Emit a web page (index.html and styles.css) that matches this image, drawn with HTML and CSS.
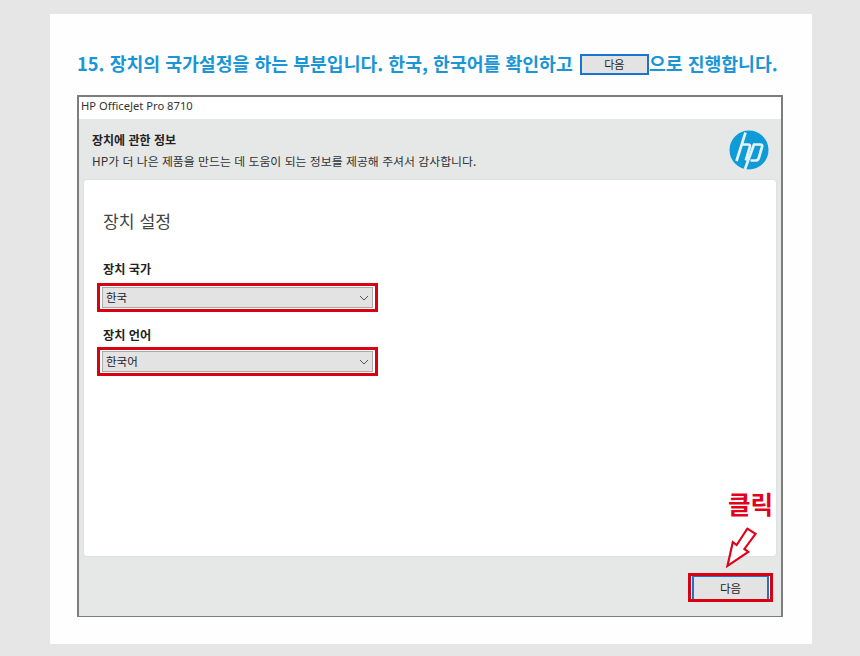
FILE: index.html
```html
<!DOCTYPE html>
<html lang="ko">
<head>
    <meta charset="UTF-8">
    <title>장치 설정</title>
    <link rel="stylesheet" href="styles.css">
</head>
<body>
<div class="panel">
    <h1 class="step">15. 장치의 국가설정을 하는 부분입니다. 한국, 한국어를 확인하고 <span class="step-btn">다음</span>으로 진행합니다.</h1>
    <div class="window">
        <div class="titlebar">HP OfficeJet Pro 8710</div>
        <div class="head">
            <div class="head-text">
                <div class="head-title">장치에 관한 정보</div>
                <div class="head-sub">HP가 더 나은 제품을 만드는 데 도움이 되는 정보를 제공해 주셔서 감사합니다.</div>
            </div>
            <svg class="logo" viewBox="0 0 40 40">
                <circle cx="20" cy="20" r="19.5" fill="#0f9bd7"/>
                <path d="M16.5 2.5 L7.5 31 M13 14.5 H19 Q21.5 14.5 20.8 17 L16.8 30.5" fill="none" stroke="#e6f4fa" stroke-width="2.7"/>
                <path d="M25 14.5 L16 39 M24 14.5 H31 Q33.8 14.5 33 17 L29.8 28 Q29 30.5 26.5 30.5 H21.5" fill="none" stroke="#e6f4fa" stroke-width="2.7"/>
            </svg>
        </div>
        <div class="card">
            <div class="card-title">장치 설정</div>
            <div class="field-label">장치 국가</div>
            <div class="mark">
                <div class="select">한국
                    <svg class="chev" viewBox="0 0 10 6"><path d="M1 1 L5 5 L9 1" fill="none" stroke="#555" stroke-width="1"/></svg>
                </div>
            </div>
            <div class="field-label">장치 언어</div>
            <div class="mark">
                <div class="select">한국어
                    <svg class="chev" viewBox="0 0 10 6"><path d="M1 1 L5 5 L9 1" fill="none" stroke="#555" stroke-width="1"/></svg>
                </div>
            </div>
        </div>
        <div class="foot">
            <div class="mark mark-next">
                <div class="next">다음</div>
            </div>
        </div>
        <!--클릭 표시-->
        <div class="click">클릭</div>
        <svg class="arrow" viewBox="0 0 32 42">
            <path d="M22 1.5 L30.5 7 L19 22.5 L23 25.5 L1.5 40 L7 15.5 L11 18.5 Z" fill="#fff" stroke="#e2001a" stroke-width="2.2"/>
        </svg>
    </div>
</div>
</body>
</html>
```

FILE: styles.css
```css
*{
    margin: 0;
    padding: 0;
    box-sizing: border-box;
}
body{
    background-color: #e6e6e6;
    padding: 14px 48px 12px 50px;
    font-family: "Noto Sans CJK KR", "Liberation Sans", sans-serif;
}
.panel{
    height: 630px;
    background-color: #fefefe;
    padding: 34px 29px 0 27px;
}
/*제목*/
.step{
    height: 47px;
    font-size: 18.3px;
    line-height: 30px;
    font-weight: 700;
    color: #1a96d6;
    white-space: nowrap;
}
.step-btn{
    display: inline-block;
    width: 69px;
    height: 21px;
    margin-left: 2px;
    vertical-align: 2px;
    background-color: #e3e3e3;
    border: 2px solid #1b74d2;
    font-size: 11px;
    line-height: 17px;
    font-weight: 400;
    color: #222;
    text-align: center;
}
/*창*/
.window{
    position: relative;
    width: 706px;
    height: 522px;
    background-color: #e6e8e8;
    border: 2px solid #7d7d7d;
    border-bottom-width: 1px;
    display: flex;
    flex-direction: column;
}
.titlebar{
    height: 22px;
    flex: none;
    background-color: #fff;
    padding-left: 2px;
    font-family: "Noto Sans", "Noto Sans CJK KR", sans-serif;
    font-size: 11.2px;
    line-height: 18px;
    color: #333;
}
.head{
    height: 61px;
    flex: none;
    display: flex;
    justify-content: space-between;
    padding: 13px 12px 0 13px;
}
.head-title{
    font-size: 12px;
    line-height: 15px;
    font-weight: 700;
    color: #222;
}
.head-sub{
    margin-top: 6px;
    font-size: 11.9px;
    line-height: 15px;
    color: #333;
}
.logo{
    width: 40px;
    height: 40px;
    margin-top: -2px;
}
.card{
    height: 376px;
    flex: none;
    margin: 0 5px;
    padding: 29px 19px 0;
    background-color: #fff;
    border-radius: 3px;
    box-shadow: 0 0 2px #cfd1d1;
}
.card-title{
    font-size: 17.2px;
    line-height: 24px;
    color: #444;
    margin-bottom: 28px;
}
.field-label{
    font-size: 12.2px;
    line-height: 16px;
    font-weight: 700;
    color: #222;
    margin-bottom: 6px;
}
.mark + .field-label{
    margin-bottom: 4px;
}
/*빨간 표시*/
.mark{
    width: 281px;
    height: 29px;
    border: 3px solid #d9000f;
    background-color: #fff;
    padding: 1px 2px;
    margin-left: -6px;
    margin-bottom: 15px;
}
.select{
    height: 21px;
    background-color: #e3e3e3;
    border: 1px solid #aaa;
    padding-left: 3px;
    font-size: 11.5px;
    line-height: 19px;
    color: #222;
    display: flex;
    justify-content: space-between;
    align-items: center;
}
.chev{
    width: 10px;
    height: 6px;
    margin-right: 3px;
}
.foot{
    flex: 1;
    display: flex;
    justify-content: flex-end;
    align-items: flex-start;
    padding: 17px 8px 0 0;
}
.mark-next{
    width: 85px;
    margin: 0;
    padding: 0;
    border-width: 3px;
}
.next{
    height: 23px;
    background-color: #e3e3e3;
    border-left: 2px solid #1b74d2;
    border-right: 2px solid #1b74d2;
    border-top: 1px solid #1b74d2;
    font-size: 11.5px;
    line-height: 22px;
    color: #222;
    text-align: center;
    margin: 0 1px;
}
.click{
    position: absolute;
    left: 649px;
    top: 392px;
    font-size: 24.5px;
    line-height: 30px;
    font-weight: 700;
    color: #e2001a;
}
.arrow{
    position: absolute;
    left: 647px;
    top: 430px;
    width: 31px;
    height: 41px;
}
```
